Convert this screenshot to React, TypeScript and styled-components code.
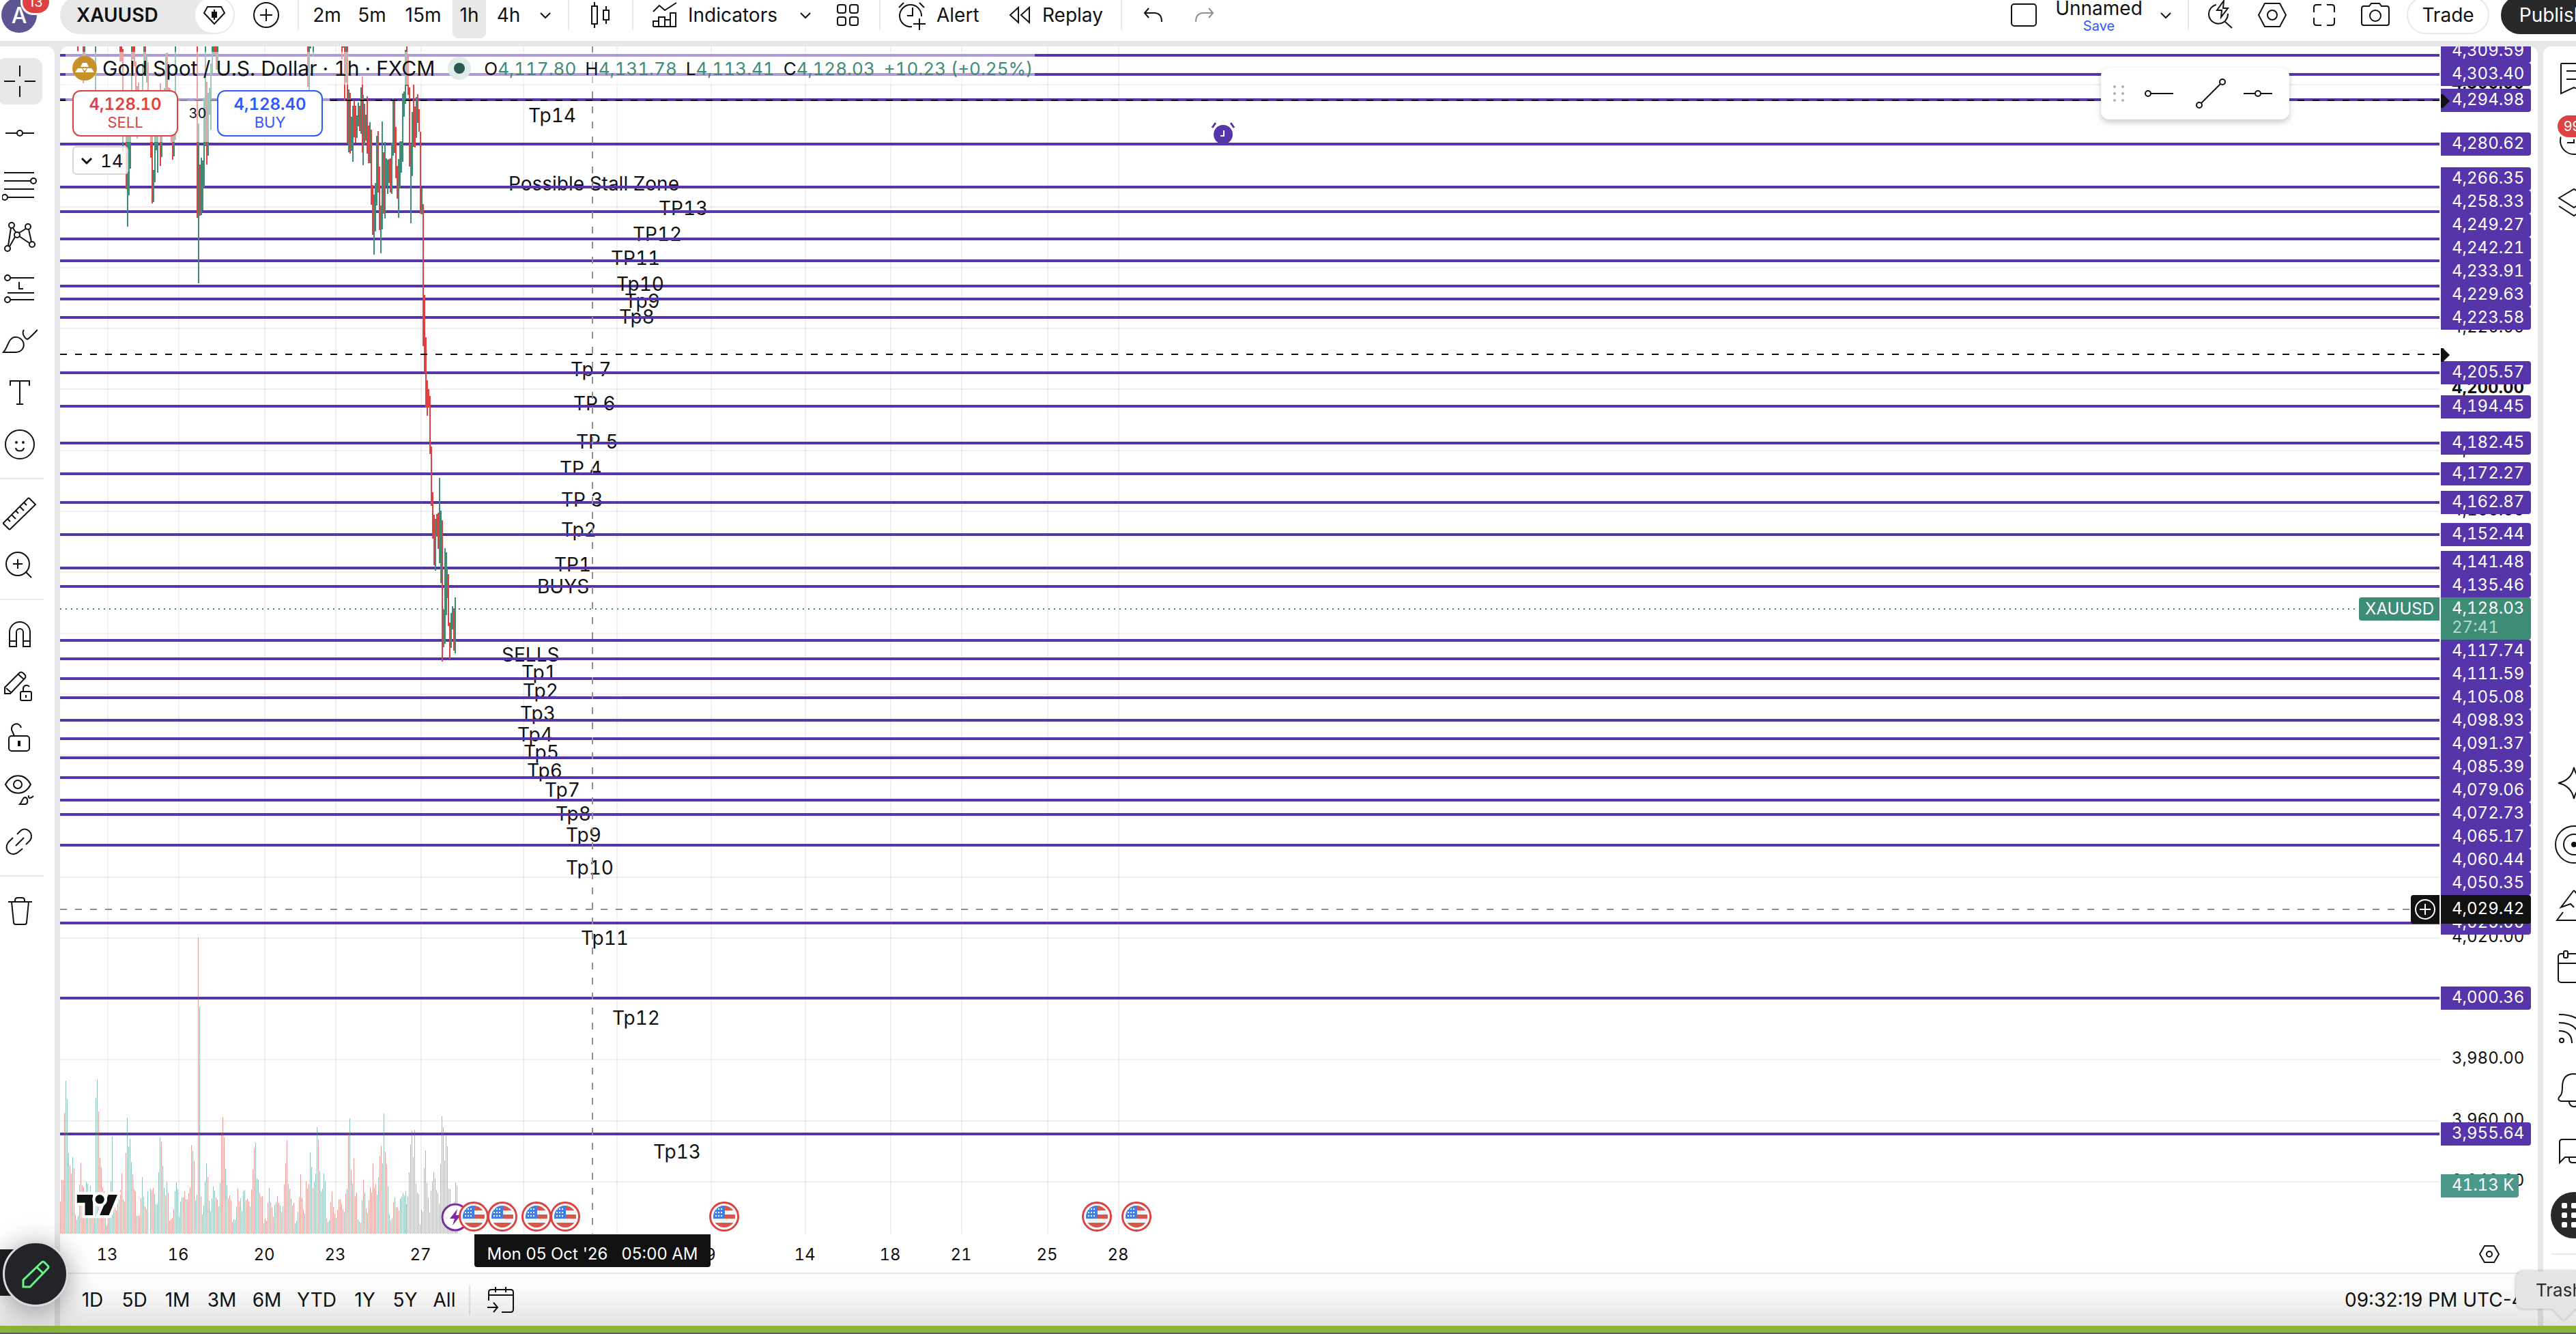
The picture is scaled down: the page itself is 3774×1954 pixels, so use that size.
import React from "react";
import styled, { createGlobalStyle } from "styled-components";

const INK = "#111111";
const LINE = "#e8e8e8";
const PURPLE = "#5634a9";
const GREEN = "#3f8c76";
const RED = "#dc4242";
const BLUE = "#2f59fb";

const GlobalStyle = createGlobalStyle`
  *, *::before, *::after { box-sizing: border-box; }
  html, body { margin: 0; overflow: hidden; background: #ffffff; }
  body, button { font-family: Inter, "Liberation Sans", sans-serif; color: ${INK}; }
  button { margin: 0; padding: 0; border: 0; background: none; font-size: 28px; cursor: pointer; }
  svg { display: block; flex: none; }
`;

/* ---------- shell ---------- */

const Shell = styled.div`
  height: 100vh;
  display: flex;
  flex-direction: column;
  position: relative;
  overflow: hidden;
  background: ${LINE};
`;

const HeaderClip = styled.header`
  height: 60px;
  flex: none;
  overflow: hidden;
  background: #ffffff;
  margin-bottom: 8px;
`;

const HeaderBar = styled.div`
  height: 76px;
  margin-top: -16px;
  display: flex;
  align-items: center;
`;

const Workspace = styled.div`
  flex: 1;
  min-height: 0;
  display: flex;
  gap: 8px;
`;

const DesktopEdge = styled.footer`
  height: 12px;
  flex: none;
  background: #8bb437;
  border-bottom: 2px solid #5c5c5e;
`;

/* ---------- header ---------- */

const HeaderButton = styled.button<{ $w: number; $lead?: number; $gap?: number; $dim?: boolean }>`
  width: ${(p) => p.$w}px;
  height: 68px;
  flex: none;
  display: flex;
  align-items: center;
  justify-content: ${(p) => (p.$lead ? "flex-start" : "center")};
  padding-left: ${(p) => p.$lead ?? 0}px;
  gap: ${(p) => p.$gap ?? 0}px;
  white-space: nowrap;
  color: ${(p) => (p.$dim ? "#8f8f8f" : INK)};
`;

const IntervalButton = styled(HeaderButton)<{ $active?: boolean }>`
  background: ${(p) => (p.$active ? LINE : "transparent")};
  border-radius: 8px;
  margin: 0 1px;
`;

const HeaderRule = styled.span<{ $before?: number }>`
  width: 2px;
  height: 44px;
  flex: none;
  background: ${LINE};
  margin-left: ${(p) => p.$before ?? 0}px;
`;

const Intervals = styled.nav`
  display: flex;
  padding-left: 8px;
`;

const AvatarButton = styled.button`
  width: 88px;
  height: 68px;
  flex: none;
  padding-left: 2px;
  position: relative;
`;

const Avatar = styled.span`
  display: flex;
  align-items: center;
  justify-content: center;
  width: 52px;
  height: 52px;
  border-radius: 50%;
  background: #5d5592;
  color: #ffffff;
  font-size: 32px;
  font-weight: 500;
`;

const Count = styled.span<{ $x: number; $y: number }>`
  position: absolute;
  left: ${(p) => p.$x}px;
  top: ${(p) => p.$y}px;
  height: 38px;
  padding: 0 9px;
  border-radius: 19px;
  border: 3px solid #ffffff;
  background: ${RED};
  color: #ffffff;
  font-size: 20px;
  line-height: 32px;
`;

const SymbolPill = styled.div`
  width: 256px;
  height: 56px;
  flex: none;
  display: flex;
  align-items: center;
  justify-content: space-between;
  padding: 0 2px 0 24px;
  border-radius: 28px;
  background: ${LINE};
`;

const SymbolName = styled.button`
  font-weight: 600;
`;

const RoundButton = styled.button`
  width: 56px;
  height: 52px;
  border-radius: 26px;
  background: #ffffff;
  display: flex;
  align-items: center;
  justify-content: center;
`;

const HeaderEnd = styled.div`
  display: flex;
  align-items: center;
  margin-left: auto;
  margin-right: -40px;
`;

const LayoutName = styled.button`
  width: 144px;
  height: 56px;
  flex: none;
  display: flex;
  flex-direction: column;
  align-items: center;
  line-height: 36px;
`;

const SaveLine = styled.span`
  font-size: 20px;
  line-height: 16px;
  color: ${BLUE};
`;

const PillButton = styled.button<{ $w: number; $solid?: boolean }>`
  width: ${(p) => p.$w}px;
  height: 56px;
  flex: none;
  margin-left: 17px;
  border-radius: 28px;
  border: 2px solid ${(p) => (p.$solid ? "#292929" : LINE)};
  background: ${(p) => (p.$solid ? "#292929" : "#ffffff")};
  color: ${(p) => (p.$solid ? "#ffffff" : INK)};
`;

/* ---------- side bars ---------- */

const LeftBar = styled.nav`
  width: 80px;
  flex: none;
  background: #ffffff;
  border-top-right-radius: 12px;
  padding-top: 17px;
  display: flex;
  flex-direction: column;
  gap: 8px;
`;

const ToolButton = styled.button<{ $active?: boolean }>`
  width: 66px;
  height: 68px;
  flex: none;
  margin-left: -4px;
  border-radius: 12px;
  display: flex;
  align-items: center;
  justify-content: center;
  background: ${(p) => (p.$active ? LINE : "transparent")};
`;

const ToolRule = styled.span`
  width: 64px;
  height: 2px;
  flex: none;
  margin: 7px 0 8px;
  background: ${LINE};
`;

const RightBar = styled.nav`
  width: 48px;
  flex: none;
  overflow: hidden;
  background: #ffffff;
  border-top-left-radius: 12px;
  display: flex;
  flex-direction: column;
  justify-content: space-between;
`;

const RightGroup = styled.div<{ $end?: boolean }>`
  width: 90px;
  padding: ${(p) => (p.$end ? "0 0 104px" : "2px 0 0")};
  display: flex;
  flex-direction: column;
  align-items: center;
`;

const SideButton = styled.button`
  width: 68px;
  height: 90px;
  display: flex;
  align-items: center;
  justify-content: center;
  position: relative;
`;

const AppsButton = styled(SideButton)`
  height: 68px;
  margin-top: 14px;
  border-radius: 34px;
  background: #292929;
`;

const SideRule = styled.span`
  width: 66px;
  height: 2px;
  margin-top: 22px;
  background: ${LINE};
`;

/* ---------- chart ---------- */

const ChartPanel = styled.main`
  flex: 1;
  min-width: 0;
  display: flex;
  flex-direction: column;
  background: #ffffff;
  border-radius: 12px 12px 0 0;
  overflow: hidden;
`;

const PlotRow = styled.div`
  flex: 1;
  min-height: 0;
  display: flex;
  position: relative;
  font-variant-numeric: tabular-nums;

  button { font-variant-numeric: tabular-nums; }
`;

const Plot = styled.section`
  flex: 1;
  min-width: 0;
  position: relative;
  overflow: hidden;
`;

const PriceAxis = styled.aside`
  width: 144px;
  flex: none;
  position: relative;
  overflow: hidden;
  font-size: 24px;
`;

const Tick = styled.span<{ $bold?: boolean }>`
  position: absolute;
  left: 18px;
  line-height: 28px;
  font-weight: ${(p) => (p.$bold ? 700 : 400)};
`;

const Badge = styled.span<{ $bg?: string; $h?: number; $w?: number }>`
  position: absolute;
  left: 2px;
  width: ${(p) => p.$w ?? 132}px;
  height: ${(p) => p.$h ?? 34}px;
  padding-left: 16px;
  line-height: ${(p) => (p.$h === 42 ? 40 : 32)}px;
  border-radius: 0 4px 4px 0;
  background: ${(p) => p.$bg ?? PURPLE};
  color: #ffffff;
`;

const Countdown = styled.span`
  display: block;
  line-height: 24px;
  color: #b5d8cc;
`;

const SymbolTag = styled.span`
  position: absolute;
  right: 0;
  top: 807px;
  height: 34px;
  padding: 0 8px 0 9px;
  border-radius: 4px 0 0 4px;
  background: ${GREEN};
  color: #ffffff;
  font-size: 24px;
  line-height: 33px;
`;

const AddAtPrice = styled.button`
  position: absolute;
  right: 0;
  top: 1243px;
  width: 42px;
  height: 42px;
  border-radius: 4px 0 0 4px;
  background: ${INK};
  color: #ffffff;
  display: flex;
  align-items: center;
  justify-content: center;
`;

const Legend = styled.div`
  position: absolute;
  left: 8px;
  top: 8px;
`;

const LegendRow = styled.div`
  width: 1420px;
  height: 48px;
  padding-left: 10px;
  display: flex;
  align-items: center;
  background: rgba(255, 255, 255, 0.5);
`;

const Title = styled.h1`
  margin: 0 18px 0 8px;
  font-size: 30px;
  font-weight: 400;
  white-space: nowrap;
`;

const Quotes = styled.div`
  display: flex;
  gap: 13px;
  margin-left: 18px;
  font-size: 26px;
  white-space: nowrap;
`;

const Up = styled.span`
  color: ${GREEN};
`;

const TradeRow = styled.div`
  width: 387px;
  height: 84px;
  padding: 0 10px;
  display: flex;
  align-items: center;
  justify-content: space-between;
  background: rgba(255, 255, 255, 0.5);
`;

const DealButton = styled.button<{ $tone: string }>`
  width: 155px;
  height: 68px;
  border: 2px solid ${(p) => p.$tone};
  border-radius: 12px;
  background: #ffffff;
  color: ${(p) => p.$tone};
  font-size: 22px;
  line-height: 27px;
`;

const DealPrice = styled.strong`
  display: block;
  font-size: 24px;
  font-weight: 600;
`;

const Spread = styled.span`
  font-size: 20px;
`;

const CollapseButton = styled.button`
  width: 82px;
  height: 42px;
  margin: 6px 0 0 10px;
  border: 2px solid #d6d6d6;
  border-radius: 6px;
  background: rgba(255, 255, 255, 0.8);
  font-size: 26px;
  display: flex;
  align-items: center;
  gap: 10px;
  padding-left: 9px;
`;

const DrawBar = styled.div`
  position: absolute;
  right: 364px;
  top: 31px;
  width: 276px;
  height: 76px;
  padding-left: 12px;
  border-radius: 12px;
  background: #ffffff;
  box-shadow: 0 4px 8px rgba(0, 0, 0, 0.22);
  display: flex;
  align-items: center;
`;

const DrawButton = styled.button<{ $w: number }>`
  width: ${(p) => p.$w}px;
  height: 60px;
  display: flex;
  align-items: center;
  justify-content: center;
`;

const Logo = styled.a`
  position: absolute;
  left: 19px;
  bottom: 22px;
`;

const EventButton = styled.button`
  position: absolute;
  bottom: 3px;
  width: 44px;
  height: 44px;
  margin-left: -22px;
`;

const TimeAxis = styled.div`
  height: 59px;
  flex: none;
  position: relative;
  border-bottom: 2px solid ${LINE};
  font-size: 24px;
  line-height: 28px;
`;

const TimeTick = styled.span`
  position: absolute;
  top: 17px;
  transform: translateX(-50%);
  font-variant-numeric: tabular-nums;
`;

const TimeBadge = styled.span`
  position: absolute;
  left: 607px;
  top: 1px;
  width: 346px;
  height: 48px;
  border-radius: 0 0 4px 4px;
  background: ${INK};
  color: #ffffff;
  line-height: 58px;
  text-align: center;
  white-space: pre;
`;

const AxisSettings = styled.button`
  position: absolute;
  right: 49px;
  top: 8px;
`;

const RangeBar = styled.div`
  height: 76px;
  flex: none;
  display: flex;
  align-items: center;
  padding-left: 17px;
`;

const RangeButton = styled.button<{ $w: number }>`
  width: ${(p) => p.$w}px;
  height: 56px;
  flex: none;
  display: flex;
  align-items: center;
  justify-content: center;
`;

const Clock = styled.button`
  margin-left: auto;
  width: 283px;
  text-align: left;
  white-space: nowrap;
`;

/* ---------- desktop overlays ---------- */

const DockShade = styled.div`
  position: absolute;
  left: 0;
  right: 0;
  bottom: 12px;
  height: 92px;
  pointer-events: none;
  background: linear-gradient(rgba(0, 0, 0, 0), rgba(0, 0, 0, 0.02) 40%, rgba(0, 0, 0, 0.11));
`;

const SideTab = styled.div`
  position: absolute;
  left: -20px;
  bottom: 56px;
  width: 60px;
  height: 68px;
  border-radius: 12px;
  background: #202022;
`;

const PencilButton = styled.button`
  position: absolute;
  left: 4px;
  bottom: 40px;
  width: 96px;
  height: 96px;
  border-radius: 50%;
  border: 3px solid #d9dae2;
  background: #232427;
  color: #68f587;
  box-shadow: 0 6px 40px rgba(0, 0, 0, 0.4);
  display: flex;
  align-items: center;
  justify-content: center;
`;

const DockTip = styled.div`
  position: absolute;
  right: -32px;
  bottom: 37px;
  width: 120px;
  height: 55px;
  padding-left: 29px;
  border-radius: 10px;
  background: #e4e4e4;
  color: #2a2a2a;
  font-size: 26px;
  line-height: 56px;
  filter: drop-shadow(0 0 2px rgba(0, 0, 0, 0.3));

  &::after {
    content: "";
    position: absolute;
    left: 52px;
    top: 54px;
    border: 18px solid transparent;
    border-top-color: #e4e4e4;
    border-bottom: 0;
  }
`;

/* ---------- icons, drawn around their own centre ---------- */

type IconProps = { s?: number; w?: number; children: React.ReactNode };

const Icon = ({ s = 48, w = 2, children }: IconProps) => (
  <svg
    width={s}
    height={s}
    viewBox={`${-s / 2} ${-s / 2} ${s} ${s}`}
    fill="none"
    stroke="currentColor"
    strokeWidth={w}
    aria-hidden="true"
  >
    {children}
  </svg>
);

const Chevron = ({ w = 2 }: { w?: number }) => (
  <Icon s={20} w={w}>
    <path d="M-7 -3L0 4L7 -3" />
  </Icon>
);

const tools: ([string, React.ReactNode] | null)[] = [
  ["Cross", <path d="M0 -23V-7M0 7V23M-23 0H-7M7 0H23" />],
  ["Trend line", <><circle r="4" /><path d="M-21 0H-4M4 0H21" /></>],
  ["Fib retracement", <><path d="M-23 -18H21M-23 -6H15M-23 6H21M-17 18H21" /><circle cx="20" cy="-6" r="4" /><circle cx="-22" cy="18" r="4" /></>],
  ["Patterns", <><circle cx="-12" cy="-17" r="4" /><circle cx="12" cy="-15" r="4" /><circle cx="-4" cy="-3" r="4" /><circle cx="18" cy="11" r="4" /><circle cx="-18" cy="17" r="4" /><path d="M-13 -13L-17 13M-10 -13L-6 -7M-1 -6L9 -12M13 -11L17 7M-1 -1L14 9M-7 0L-15 14" /></>],
  ["Forecast", <><circle cx="-18" cy="-16" r="4" /><circle cx="-18" cy="16" r="4" /><path d="M-14 -16H21M-14 16H21M-18 6H21M-1 -10V0H5" /></>],
  ["Brush", <path d="M-24 17C-18 10 -18 4 -14 -1C-9 -8 1 -6 5 2C8 10 2 17 -6 17ZM6 -16C2 -10 8 -3 11 -2C15 -4 21 -11 26 -16" />],
  ["Text", <path d="M-14 -10V-17H14V-10M0 -17V17M-5 17H5" />],
  ["Emoji", <><circle r="21" /><path d="M-6 5C-5 11 5 11 6 5" /><circle cx="-5" cy="-3" r="1" /><circle cx="5" cy="-3" r="1" /></>],
  null,
  ["Measure", <path d="M-24 14L12 -22Q13 -23 14 -22L23 -13L-14 23Q-15 24 -16 23L-24 15ZM-18 8L-14 12M-12 2L-6 8M-6 -4L-2 0M0 -10L6 -4M6 -16L10 -12" />],
  ["Zoom in", <><circle cx="-3" cy="-2" r="17" /><path d="M9 10L17 18M-10 -2H4M-3 -9V5" /></>],
  null,
  ["Magnet", <path d="M-15 18V-3A15 15 0 0 1 15 -3V18H5V-3A5 5 0 0 0 -5 -3V18ZM-15 10H-5M5 10H15" />],
  ["Lock drawings", <><path d="M-22 11V2L-1 -19Q2 -22 5 -19L7 -17Q10 -14 7 -11L-14 11ZM-20 3L-12 10M-2 -17L6 -10" /><rect x="1" y="8" width="16" height="13" rx="2" /><path d="M5 8V3A5 5 0 0 1 14 1M9 13V17" /></>],
  ["Hide lock", <><rect x="-16" y="-3" width="30" height="22" rx="4" /><path d="M-8 -3L-12 -12A7 7 0 0 1 2 -15" /><rect x="-2" y="5" width="2" height="6" fill="currentColor" /></>],
  ["Hide drawings", <><path d="M-21 -8C-12 -25 7 -25 16 -8C7 9 -12 9 -21 -8Z" /><circle cx="-3" cy="-8" r="6" /><path d="M0 21C4 17 3 13 7 11C12 10 13 20 8 21ZM13 8C12 12 15 14 20 9" /></>],
  ["Link", <path d="M-4 -11L1 -16C9 -24 22 -12 15 -2L9 4M4 10L-2 15C-12 24 -25 12 -17 1L-10 -6M-6 6L6 -6" />],
  null,
  ["Remove", <path d="M-17 -13H18M-7 -13V-15Q-7 -19 -3 -19H3Q7 -19 7 -15V-13M-12 -13L-9 17Q-9 20 -6 20H7Q10 20 10 17L13 -13" />],
];

const sideTop: [string, React.ReactNode][] = [
  ["Watchlist", <path d="M-19 -21Q-19 -22 -18 -22H18V22L0 13L-19 22ZM-11 -11H11M-11 1H11" />],
  ["Alerts", <><circle cy="1" r="20" /><path d="M0 -12V4H-10M-22 -14L-14 -22" /></>],
  ["Object tree", <path d="M-22 -5L0 -18L22 -5L0 9ZM-22 7L0 21L22 7" />],
];

const sideBottom: [string, React.ReactNode][] = [
  ["Assistant", <path d="M0 -23Q4 -4 23 0Q4 4 0 23Q-4 4 -23 0Q-4 -4 0 -23Z" />],
  ["Ideas", <><circle r="27" /><circle r="15" /><circle r="3" fill="currentColor" /></>],
  ["Pine", <path d="M0 -23L-19 2L-5 -3L0 2M0 -23L19 2M-16 9L-25 21H25" />],
  ["Calendar", <><rect x="-23" y="-20" width="46" height="42" rx="4" /><path d="M-23 -6H23" /><rect x="-15" y="-24" width="6" height="10" rx="2" fill="#fff" /></>],
  ["Feed", <><circle cx="-18" cy="17" r="3" /><path d="M-22 3Q-3 3 -3 21M-22 -9Q9 -9 9 21M-22 -21Q21 -21 21 21" /></>],
  ["Notifications", <path d="M-17 -5Q-17 -24 0 -24Q17 -24 17 -5Q17 5 20 7Q26 14 19 16H-19Q-26 14 -20 8Q-17 5 -17 -5ZM-7 17A7 7 0 0 0 7 17" />],
  ["Chats", <path d="M-21 16V-14Q-21 -18 -17 -18H21V8H-13ZM-7 8V11Q-7 16 -2 16H21" />],
];

/* ---------- chart data ---------- */

const TOP_PRICE = 4300;
const TOP_Y = 56;
const PX_PER_UNIT = 4.464;
const yOf = (price: number) => Math.round(TOP_Y + (TOP_PRICE - price) * PX_PER_UNIT);
const money = (v: number) => v.toLocaleString("en-US", { minimumFractionDigits: 2, maximumFractionDigits: 2 });

const ticks = Array.from({ length: 19 }, (_, i) => TOP_PRICE - i * 20);

const levels: [number, number][] = [
  [4309.59, -10], [4303.4, 24], [4294.98, 62], [4280.62, 126], [4266.35, 177], [4258.33, 211],
  [4249.27, 245], [4242.21, 279], [4233.91, 313], [4229.63, 347], [4223.58, 381], [4205.57, 461],
  [4194.45, 511], [4182.45, 564], [4172.27, 609], [4162.87, 651], [4152.44, 698], [4141.48, 739],
  [4135.46, 773], [4117.74, 869], [4111.59, 903], [4105.08, 937], [4098.93, 971], [4091.37, 1005],
  [4085.39, 1039], [4079.06, 1073], [4072.73, 1107], [4065.17, 1141], [4060.44, 1175], [4050.35, 1209],
  [4025.0, 1267], [4000.36, 1377], [3955.64, 1576],
];

const days: [string, number][] = [
  ["13", 69], ["16", 173], ["20", 299], ["23", 403], ["27", 528], ["", 678], ["", 815], ["9", 953],
  ["14", 1091], ["18", 1216], ["21", 1320], ["25", 1446], ["28", 1550],
];

const notes: [string, number, number][] = [
  ["Tp14", 686, 111], ["Possible Stall Zone", 657, 211], ["TP13", 877, 247], ["TP12", 839, 285],
  ["TP11", 807, 320], ["Tp9", 827, 383], ["Tp8", 819, 406], ["Tp 7", 748, 483],
  ["TP 6", 752, 533], ["TP 5", 756, 589], ["TP 4", 732, 628], ["TP 3", 734, 674], ["Tp2", 734, 718],
  ["TP1", 724, 769], ["BUYS", 699, 801], ["SELLS", 647, 901], ["Tp1", 676, 927], ["Tp2", 678, 954],
  ["Tp3", 674, 987], ["Tp4", 670, 1018], ["Tp5", 679, 1044], ["Tp6", 684, 1071], ["Tp7", 710, 1099],
  ["Tp8", 726, 1134], ["Tp9", 741, 1165], ["Tp10", 741, 1213], ["Tp11", 763, 1316], ["Tp12", 809, 1433],
  ["Tp13", 869, 1629],
];

/* Notes that sit in front of the level lines. */
const frontNotes: [string, number, number][] = [["Tp10", 815, 358]];

/* Each candle: x, high, low and direction, on a grid of thirds of a pixel. */
const candleText = `
78 24 45 r,102 24 186 r,108 24 90 g,156 24 300 g,264 24 90 r,270 24 90 r,275 36 300 r,276 400 486 g,
291 400 651 r,297 400 816 g,303 400 678 g,309 400 560 g,315 24 300 g,321 24 80 r,327 24 110 r,333 90 420 r,
339 198 428 g,345 183 300 r,363 100 300 g,369 24 140 g,375 24 100 r,381 66 183 g,387 94 300 r,399 400 513 r,
405 400 714 r,411 567 708 g,417 400 620 g,423 400 480 g,429 400 579 g,441 186 549 r,447 400 510 g,459 207 300 g,
465 54 300 g,471 51 300 r,477 204 300 r,483 207 300 r,489 400 444 r,495 400 522 r,501 400 507 g,507 24 435 g,
603 24 777 r,609 363 1065 g,615 543 768 r,621 513 765 g,627 525 744 g,633 250 645 g,639 24 462 g,645 180 543 r,
651 228 504 g,657 207 324 g,663 100 390 g,669 24 140 g,675 24 60 g,681 24 60 r,687 24 126 r,693 24 126 g,
1089 24 201 r,1095 24 300 g,1101 24 33 g,1113 24 70 g,1239 24 80 r,1245 24 30 g,1251 24 264 r,1257 24 182 g,
1263 24 450 r,1269 213 489 g,1275 228 495 r,1281 333 483 g,1287 285 531 g,1293 264 423 r,1299 285 447 r,
1305 327 426 g,1311 270 375 g,1317 285 396 r,1323 204 408 g,1329 156 489 r,1332 237 546 g,1338 276 456 r,
1344 324 438 g,1350 243 495 r,1356 372 537 r,1362 357 537 g,1368 390 720 r,1374 633 852 r,1380 675 939 g,
1386 624 837 g,1392 417 723 g,1398 396 666 r,1404 552 831 r,1410 723 933 g,1416 354 828 g,1422 489 759 r,
1428 444 780 g,1434 516 636 g,1440 522 672 g,1446 519 624 r,1452 516 666 r,1458 447 672 g,1464 252 504 g,
1470 264 492 r,1476 378 603 r,1482 549 693 r,1488 519 777 g,1494 441 645 g,1500 441 579 g,1506 231 531 g,
1512 222 333 g,1518 39 276 g,1524 24 198 r,1530 69 237 r,1536 204 552 r,1542 453 801 g,1548 312 594 g,
1554 192 465 r,1560 288 468 r,1566 246 426 g,1572 235 360 r,1578 300 400 r,1584 399 760 r,1590 648 762 g,
1596 716 1340 r,1602 1116 1455 r,1608 1302 1610 r,1614 1491 1647 r,1620 1530 1611 r,1626 1560 1815 r,
1632 1782 2043 r,1638 1983 2187 r,1644 2082 2304 r,1650 2100 2328 g,1656 2079 2178 r,1662 2073 2232 r,
1668 1920 2295 g,1674 2064 2382 g,1680 2106 2727 r,1686 2500 2664 g,1692 2229 2649 g,1698 2247 2523 g,
1701 2315 2448 g,1707 2343 2571 r,1713 2556 2718 r,1719 2514 2667 g,1725 2484 2586 g,1731 2499 2679 r,
1737 2445 2691 g`;

const candlePath = (tone: string) =>
  candleText
    .split(",")
    .map((c) => c.trim().split(" "))
    .filter((c) => c[3] === tone)
    .map(([x, hi, lo]) => {
      const px = Math.round(Number(x) / 3) - 1;
      const top = Math.round(Number(hi) / 3) - 8;
      const bottom = Math.round(Number(lo) / 3) - 8;
      return `M${px} ${top}h2V${bottom}h-2z`;
    })
    .join("");

/* Volume runs: the x of the first bar, then bar tops in thirds of a pixel above FLOOR. */
const FLOOR = 1101;
const volumeRuns: [number, string][] = [
  [0, "960r 864r 867r 570r 429g 510g 747g 801r 837r 765g 813r 1017r 1041g 1023g 885g 790r 888r 897r 915r 873g 882g 920r 891g 960r 985r 940g 504g 423g 564r 768r 810r 897r 915r 930g 1065r 940r 960g"],
  [74, "870g 675g 940g 960r 1000r 970r 950g 909r 837r 951g 960r 747r 591g 717g 684g 786g 840r 906r 918r 1023g 1023r 1020r 945r 852g 939g 981r 993r 915g"],
  [132, "903g 909r 900r 927g 972g 969g 831g 678g 696r 804g 900g 933r 873g 921r 1044r 1038r 1032r 993r 915g 876g 906g 1026g 960g 942g 942r 915r 951g 951r 924r 897r 711r 738g 783r 954g 930g -201r 102g 939r"],
  [208, "1017g 978g 873g 792g 852r 957g 1002g 945g 894g 912g 942r 951r 981g 879g 660r 588r 678r 816g 888g 945r 933r 954r 1050r 1038g 1041g 981g 903r 957r 945g 1002g 915g 909g 954r 948r 960r 981g 906r 819r 726r"],
  [286, "702g 858g 864g 921r 942r 936r 1056g 1035r 1044r 966r 900g 963r 987r 1026r 975g 963g 936r 966r 978g 1005r 981g 885r 792r 690r 882g 903r 948g 978r 966r 1056g 1044g 1005g 942r 840r 945r 993r 1014g"],
  [360, "870r 903r 882r 744g 807g 900r 873g 837g 633g 687r 825g 918g 903g 837g 870g 1035r 1050g 1041g 963r 918r 984r 1014r 1032g 996r 951r 951r 969r 993r 1005g 924r 903g 660r 594g 822r 882g 771r 936r"],
  [434, "921r 1038g 1047g 1053r 954g 864r 921g 990r 1014g 954r 897r 921r 792r 897r 882r 930g 852g 759r 714r 792g 573g 741r 798r 894g 1017g 1041r 1035g 963r 942g 984r 987r 999r 948g 939g 921g 933g 915g"],
  [507, "972r 939g 831r 708r 648g 765g 645r 882r 921r 927r 1062r 996r 1005r 813r 735r 879r 942r 1008r 912r 870r 831r 858r 909g 921r 969r 795g 585g 633r 780g 672g 717g 903g 906r 1000g 990r 960g 876r 891g"],
];

const volumePath = (tone: string) =>
  volumeRuns
    .flatMap(([start, run]) =>
      run.split(" ").map((bar, i) => {
        if (!bar.endsWith(tone)) return "";
        const h = Math.round((FLOOR - parseInt(bar, 10)) / 3);
        return `M${start + i * 2} 1739v${-h}h1v${h}z`;
      }),
    )
    .join("");

const flagsAt = [606, 648, 698, 740, 973, 1519, 1577];

const Flag = () => (
  <svg width="44" height="44" viewBox="0 0 44 44" aria-hidden="true">
    <clipPath id="flag-disc"><circle cx="22" cy="22" r="16" /></clipPath>
    <circle cx="22" cy="22" r="20.5" fill="#fff" stroke={RED} strokeWidth="3" />
    <g clipPath="url(#flag-disc)">
      <rect x="6" y="6" width="32" height="32" fill="#f3f4f8" />
      <path d="M6 6h32v7H6zM6 19h32v6H6zM6 31h32v7H6z" fill="#d75549" />
      <rect x="6" y="6" width="17" height="19" fill="#3f7fe8" />
      <path d="M9 11h12M9 16h12M9 21h12" stroke="#fff" strokeWidth="2" strokeDasharray="2 2" />
    </g>
  </svg>
);

const Arrow = ({ y }: { y: number }) => (
  <svg width="14" height="20" viewBox="0 0 14 20" style={{ position: "absolute", left: 2, top: y - 9 }} aria-hidden="true">
    <path d="M0 0H3Q4 0 5 2L13 10L5 18Q4 20 3 20H0Z" fill={INK} />
  </svg>
);

const NoteLayer = ({ items }: { items: [string, number, number][] }) => (
  <g fontSize="28" fill={INK}>
    {items.map(([label, x, y]) => <text key={`${label}${y}`} x={x} y={y}>{label}</text>)}
  </g>
);

const ChartDrawing = () => (
  <svg width="100%" height="100%" role="img" aria-label="XAUUSD hourly chart">
    <g stroke="#000" strokeOpacity="0.06" strokeWidth="2">
      {days.map(([, x]) => <line key={x} x1={x + 1} x2={x + 1} y1="0" y2="100%" />)}
      {ticks.map((p) => <line key={p} x1="0" x2="100%" y1={yOf(p)} y2={yOf(p)} />)}
    </g>
    <NoteLayer items={notes} />
    <g stroke={PURPLE} strokeWidth="4">
      {levels.map(([p]) => <line key={p} x1="0" x2="100%" y1={yOf(p)} y2={yOf(p)} />)}
    </g>
    <NoteLayer items={frontNotes} />
    <path d={candlePath("g")} fill={GREEN} />
    <path d={candlePath("r")} fill={RED} />
    <path d={volumePath("g")} fill="#4a9c8c" fillOpacity="0.6" />
    <path d={volumePath("r")} fill="#dc4e48" fillOpacity="0.55" />
    <line x1="0" x2="100%" y1="824" y2="824" stroke={GREEN} strokeWidth="2" strokeDasharray="2 6" />
    <g stroke={INK} strokeWidth="2" strokeDasharray="10 12">
      <line x1="0" x2="100%" y1="79" y2="79" />
      <line x1="0" x2="100%" y1="451" y2="451" />
    </g>
    <g stroke="#8f8f8f" strokeWidth="2" strokeDasharray="10 12">
      <line x1="780" x2="780" y1="0" y2="100%" />
      <line x1="0" x2="100%" y1="1264" y2="1264" />
    </g>
    <g transform="translate(1704 129)">
      <circle r="14" fill={PURPLE} />
      <path d="M-16 -10L-11 -17M16 -10L11 -17" stroke={PURPLE} strokeWidth="3" />
      <path d="M1 -6V2H-4" stroke="#fff" strokeWidth="2" fill="none" />
    </g>
  </svg>
);

/* ---------- page parts ---------- */

const Header = () => (
  <HeaderClip>
    <HeaderBar>
      <AvatarButton aria-label="Account">
        <Avatar>A</Avatar>
        <Count $x={30} $y={-4}>13</Count>
      </AvatarButton>
      <SymbolPill>
        <SymbolName>XAUUSD</SymbolName>
        <RoundButton aria-label="Symbol details">
          <Icon s={36}>
            <path d="M-10 -12H10L15 -3L0 13L-15 -3Z" />
            <rect x="-3" y="-4" width="6" height="7" fill="currentColor" />
            <path d="M0 -8V7" />
          </Icon>
        </RoundButton>
      </SymbolPill>
      <HeaderButton $w={92} aria-label="Compare">
        <Icon><circle r="18" /><path d="M-9 0H9M0 -9V9" /></Icon>
      </HeaderButton>
      <HeaderRule />
      <Intervals>
        <IntervalButton $w={64}>2m</IntervalButton>
        <IntervalButton $w={64}>5m</IntervalButton>
        <IntervalButton $w={82}>15m</IntervalButton>
        <IntervalButton $w={49} $active>1h</IntervalButton>
        <IntervalButton $w={62}>4h</IntervalButton>
        <HeaderButton $w={44} aria-label="More intervals"><Chevron /></HeaderButton>
      </Intervals>
      <HeaderRule $before={11} />
      <HeaderButton $w={92} aria-label="Chart type">
        <Icon>
          <rect x="-13" y="-13" width="8" height="26" /><path d="M-9 -19V-13M-9 13V19" />
          <rect x="4" y="-7" width="8" height="14" /><path d="M8 -13V-7M8 7V13" />
        </Icon>
      </HeaderButton>
      <HeaderRule />
      <HeaderButton $w={226} $lead={26} $gap={14}>
        <Icon s={40}>
          <path d="M-17 -5L-8 -14L0 -7L17 -18M-17 17V9H-9V17M-9 9V3H0V17M0 7H8V17M8 7V-3H16V17H-17" />
        </Icon>
        Indicators
      </HeaderButton>
      <HeaderButton $w={52} aria-label="Favorite indicators"><Chevron /></HeaderButton>
      <HeaderButton $w={72} aria-label="Indicator templates">
        <Icon>
          {[-15, 3].flatMap((x) => [-15, 3].map((y) => <rect key={`${x}${y}`} x={x} y={y} width="12" height="12" rx="3" />))}
        </Icon>
      </HeaderButton>
      <HeaderRule $before={10} />
      <HeaderButton $w={164} $lead={25} $gap={13}>
        <Icon s={44}>
          <path d="M13 2A16 16 0 1 0 -1 17M0 -11V1H-8M-20 -11L-13 -18M17 -11L10 -18M10 5V22M1 13H19" />
        </Icon>
        Alert
      </HeaderButton>
      <HeaderButton $w={188} $lead={22} $gap={15}>
        <Icon s={36}><path d="M-2 -11V11L-14 0ZM14 -11V11L2 0Z" /></Icon>
        Replay
      </HeaderButton>
      <HeaderRule />
      <HeaderButton $w={90} aria-label="Undo">
        <Icon><path d="M-6 -10L-12 -3L-6 4M-12 -3H2Q13 -3 13 10" /></Icon>
      </HeaderButton>
      <HeaderButton $w={62} $dim aria-label="Redo">
        <Icon><path d="M6 -10L12 -3L6 4M12 -3H-2Q-13 -3 -13 10" /></Icon>
      </HeaderButton>
      <HeaderEnd>
        <HeaderButton $w={76} aria-label="Layout setup">
          <Icon><rect x="-18" y="-16" width="36" height="32" rx="4" /></Icon>
        </HeaderButton>
        <LayoutName>
          Unnamed
          <SaveLine>Save</SaveLine>
        </LayoutName>
        <HeaderButton $w={52} aria-label="Manage layouts"><Chevron /></HeaderButton>
        <HeaderRule $before={6} />
        <HeaderButton $w={92} aria-label="Quick search">
          <Icon>
            <path d="M-6 -15A14 14 0 1 0 11 -2M7 10L17 19M5 -21L-5 -7H2L1 3L11 -10H4Z" />
          </Icon>
        </HeaderButton>
        <HeaderButton $w={60} aria-label="Settings">
          <Icon><path d="M-11 -17H11L20 0L11 17H-11L-20 0Z" /><circle r="7" /></Icon>
        </HeaderButton>
        <HeaderButton $w={92} aria-label="Fullscreen">
          <Icon><path d="M-15 -4V-11Q-15 -15 -11 -15H-4M4 -15H11Q15 -15 15 -11V-4M15 4V11Q15 15 11 15H4M-4 15H-11Q-15 15 -15 11V4" /></Icon>
        </HeaderButton>
        <HeaderButton $w={58} aria-label="Snapshot">
          <Icon>
            <path d="M-20 -9Q-20 -13 -17 -13H-9L-6 -17H6L9 -13H17Q20 -13 20 -9V12Q20 15 17 15H-17Q-20 15 -20 12Z" />
            <circle cy="1" r="8" />
          </Icon>
        </HeaderButton>
        <PillButton $w={121}>Trade</PillButton>
        <PillButton $w={150} $solid>Publish</PillButton>
      </HeaderEnd>
    </HeaderBar>
  </HeaderClip>
);

const GoldIcon = () => (
  <svg width="36" height="36" viewBox="0 0 36 36" aria-hidden="true">
    <circle cx="18" cy="18" r="18" fill="#c69128" />
    <path d="M15 10H21L24 16H12ZM8 18H14L17 24H4ZM22 18H28L32 24H19ZM15 18H21L18 22Z" fill="#fff" />
  </svg>
);

const ChartLegend = () => (
  <Legend>
    <LegendRow>
      <GoldIcon />
      <Title>Gold Spot / U.S. Dollar · 1h · FXCM</Title>
      <svg width="36" height="36" aria-hidden="true">
        <circle cx="18" cy="18" r="17" fill="#dfecea" />
        <circle cx="18" cy="18" r="8" fill="#28594e" />
      </svg>
      <Quotes>
        <span>O<Up>4,117.80</Up></span>
        <span>H<Up>4,131.78</Up></span>
        <span>L<Up>4,113.41</Up></span>
        <span>C<Up>4,128.03</Up></span>
        <Up>+10.23 (+0.25%)</Up>
      </Quotes>
    </LegendRow>
    <TradeRow>
      <DealButton $tone={RED}><DealPrice>4,128.10</DealPrice>SELL</DealButton>
      <Spread>30</Spread>
      <DealButton $tone={BLUE}><DealPrice>4,128.40</DealPrice>BUY</DealButton>
    </TradeRow>
    <CollapseButton><Chevron w={3} />14</CollapseButton>
  </Legend>
);

const ranges: [string, number][] = [
  ["1D", 61], ["5D", 62], ["1M", 64], ["3M", 66], ["6M", 66], ["YTD", 80], ["1Y", 61], ["5Y", 57], ["All", 58],
];

const Chart = () => (
  <ChartPanel>
    <PlotRow>
      <Plot>
        <ChartDrawing />
        <Logo href="#" aria-label="TradingView">
          <svg width="70" height="40" viewBox="-3 1 41 24" aria-hidden="true">
            <g fill={INK} stroke="#fff" strokeWidth="5" paintOrder="stroke">
              <path d="M14 22H7V11H0V4h14v18zM28 22h-8l7.5-18h8L28 22z" />
              <circle cx="20" cy="8" r="4" />
            </g>
          </svg>
        </Logo>
        <EventButton style={{ left: 579 }} aria-label="Latest update">
          <svg width="44" height="44" viewBox="0 0 44 44" aria-hidden="true">
            <circle cx="22" cy="23" r="19" fill="#fff" stroke="#7b2aa3" strokeWidth="3" />
            <path d="M25 11L14 25H21L18 35L30 20H23Z" fill="#7b2aa3" />
          </svg>
        </EventButton>
        {flagsAt.map((x) => (
          <EventButton key={x} style={{ left: x }} aria-label="Economic event"><Flag /></EventButton>
        ))}
        <ChartLegend />
        <SymbolTag>XAUUSD</SymbolTag>
        <AddAtPrice aria-label="Add at price">
          <Icon s={36}><circle r="14" /><path d="M-8 0H8M0 -8V8" /></Icon>
        </AddAtPrice>
      </Plot>
      <PriceAxis>
        {ticks.map((p) => (
          <Tick key={p} $bold={p % 100 === 0} style={{ top: yOf(p) - 16 }}>{money(p)}</Tick>
        ))}
        {levels.map(([p, top]) => <Badge key={p} style={{ top }}>{money(p)}</Badge>)}
        <Arrow y={79} />
        <Arrow y={451} />
        <Badge $bg={GREEN} $h={62} style={{ top: 807 }}>4,128.03<Countdown>27:41</Countdown></Badge>
        <Badge $bg={INK} $h={42} style={{ top: 1243 }}>4,029.42</Badge>
        <Badge $bg="#4a998b" $w={114} style={{ top: 1652 }}>41.13 K</Badge>
      </PriceAxis>
      <DrawBar>
        <Icon s={28}>
          {[-6, 6].flatMap((x) => [-10, 0, 10].map((y) => <circle key={`${x}${y}`} cx={x} cy={y} r="2" fill="#aeaeae" stroke="none" />))}
        </Icon>
        <DrawButton $w={90} aria-label="Horizontal ray"><Icon><circle cx="-16" r="4" /><path d="M-12 0H21" /></Icon></DrawButton>
        <DrawButton $w={62} aria-label="Trend line"><Icon><circle cx="-17" cy="17" r="4" /><circle cx="17" cy="-17" r="4" /><path d="M-14 14L14 -14" /></Icon></DrawButton>
        <DrawButton $w={76} aria-label="Horizontal line"><Icon><circle r="4" /><path d="M-21 0H-4M4 0H21" /></Icon></DrawButton>
      </DrawBar>
    </PlotRow>
    <TimeAxis>
      {days.filter(([d]) => d).map(([d, x]) => <TimeTick key={x} style={{ left: x }}>{d}</TimeTick>)}
      <TimeBadge>{"Mon 05 Oct '26   05:00 AM"}</TimeBadge>
      <AxisSettings aria-label="Axis settings">
        <Icon s={44}><path d="M-7 -12H7L14 0L7 12H-7L-14 0Z" /><circle r="4" /></Icon>
      </AxisSettings>
    </TimeAxis>
    <RangeBar>
      {ranges.map(([r, w]) => <RangeButton key={r} $w={w}>{r}</RangeButton>)}
      <HeaderRule $before={7} />
      <RangeButton $w={88} aria-label="Go to date">
        <Icon>
          <path d="M-17 1V-11Q-17 -15 -13 -15H15Q19 -15 19 -11V14Q19 18 15 18H2M-17 -7H19M-7 -19V-11M8 -19V-11M-19 11H-4M-10 4L-4 11L-10 18" />
        </Icon>
      </RangeButton>
      <Clock>09:32:19 PM UTC-4</Clock>
    </RangeBar>
  </ChartPanel>
);

export default function App() {
  return (
    <>
      <GlobalStyle />
      <Shell>
        <Header />
        <Workspace>
          <LeftBar aria-label="Drawing tools">
            {tools.map((tool, i) =>
              tool ? (
                <ToolButton key={tool[0]} $active={i === 0} aria-label={tool[0]}>
                  <Icon s={52}>{tool[1]}</Icon>
                </ToolButton>
              ) : (
                <ToolRule key={i} />
              ),
            )}
          </LeftBar>
          <Chart />
          <RightBar aria-label="Panels">
            <RightGroup>
              {sideTop.map(([name, art]) => (
                <SideButton key={name} aria-label={name}>
                  <Icon s={56}>{art}</Icon>
                  {name === "Alerts" && <Count $x={7} $y={6}>99+</Count>}
                </SideButton>
              ))}
            </RightGroup>
            <RightGroup $end>
              {sideBottom.map(([name, art]) => (
                <SideButton key={name} aria-label={name}><Icon s={56}>{art}</Icon></SideButton>
              ))}
              <AppsButton aria-label="All apps">
                <Icon s={56}>
                  {[-18, -4, 10].flatMap((x) => [-18, -4, 10].map((y) => (
                    <rect key={`${x}${y}`} x={x} y={y} width="8" height="8" rx="2" fill="#fff" stroke="none" />
                  )))}
                </Icon>
              </AppsButton>
              <SideRule />
            </RightGroup>
          </RightBar>
        </Workspace>
        <DesktopEdge />
        <DockShade />
        <SideTab />
        <PencilButton aria-label="Annotate">
          <Icon s={52} w={3}>
            <path d="M-18 19V9L9 -17Q11 -19 13 -17L18 -12Q20 -10 18 -8L-8 19ZM2 -10L11 -1" />
          </Icon>
        </PencilButton>
        <DockTip>Trash</DockTip>
      </Shell>
    </>
  );
}
